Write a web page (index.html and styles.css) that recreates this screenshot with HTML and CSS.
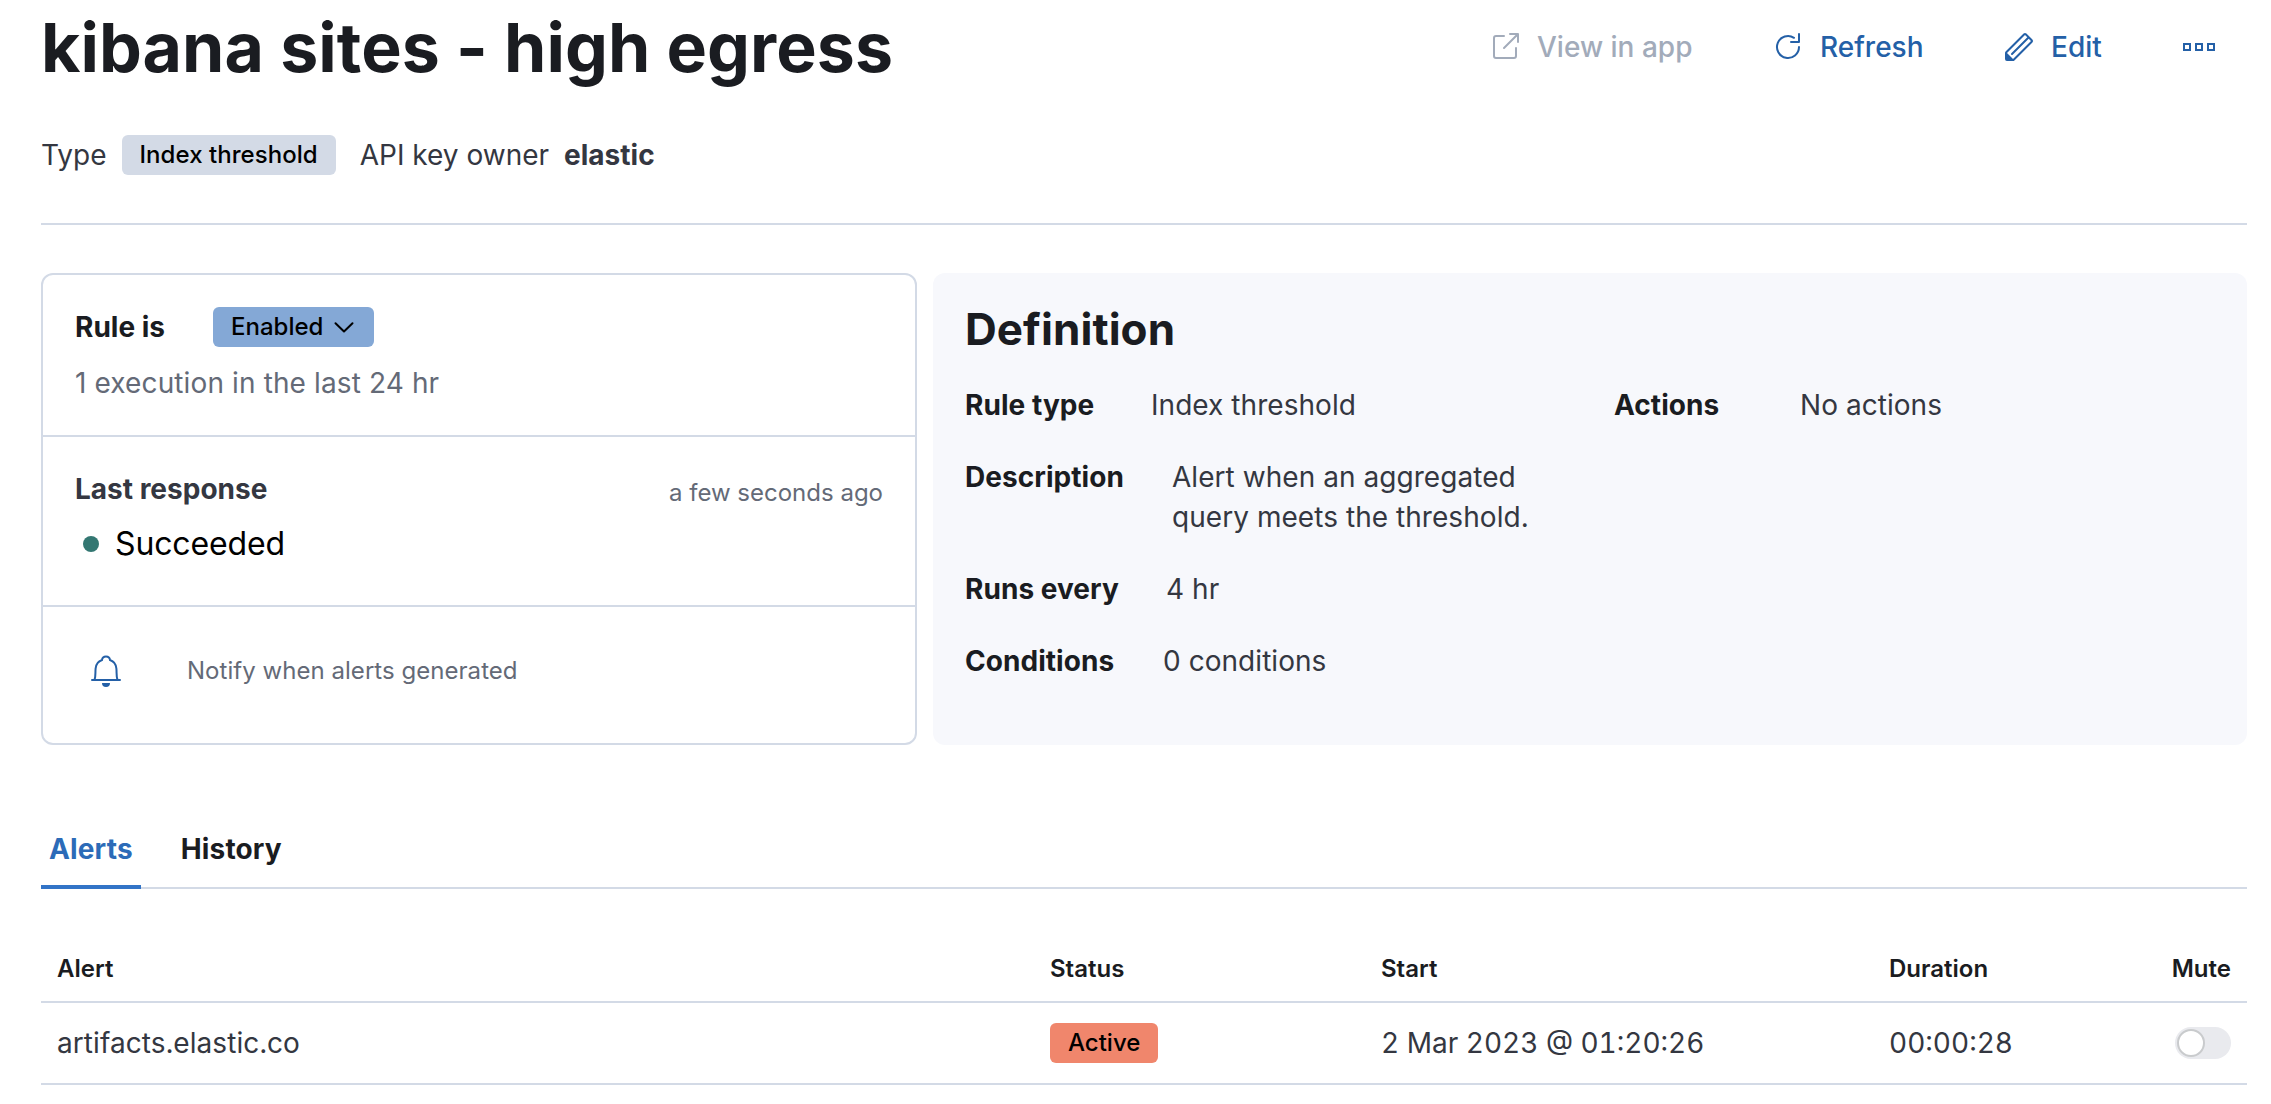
FILE: index.html
```html
<!DOCTYPE html>
<html lang="en">
<head>
<meta charset="utf-8">
<title>kibana sites - high egress</title>
<link rel="stylesheet" href="styles.css">
</head>
<body>
<main class="page">
  <header class="header">
    <h1 class="title">kibana sites - high egress</h1>
    <nav class="actions">
      <button class="action action-view" disabled>
        <svg class="icon" viewBox="0 0 16 16" fill="none" stroke="currentColor" stroke-linecap="round" stroke-linejoin="round"><path d="M7.500 2.500h-4a1 1 0 0 0-1 1v9a1 1 0 0 0 1 1h9a1 1 0 0 0 1-1v-4M10.500 1.500h4v4M14.500 1.500l-7 7"/></svg>
        <span>View in app</span>
      </button>
      <button class="action action-refresh">
        <svg class="icon" viewBox="0 0 16 16" fill="none" stroke="currentColor" stroke-linecap="round" stroke-linejoin="round"><path d="M13.500 8A5.500 5.500 0 1 1 11 3.400M13.500 1.500v4h-4"/></svg>
        <span>Refresh</span>
      </button>
      <button class="action action-edit">
        <svg class="icon" viewBox="0 0 16 16" fill="currentColor"><path fill-rule="evenodd" d="M12.148 3.148 11 2l-9 9v3h3l9-9-1.144-1.144-8.002 7.998a.502.502 0 0 1-.708 0 .502.502 0 0 1 0-.708l8.002-7.998zM11 1c.256 0 .512.098.707.293l3 3a.999.999 0 0 1 0 1.414l-9 9A.997.997 0 0 1 5 15H2a1 1 0 0 1-1-1v-3c0-.256.098-.512.293-.707l9-9A.997.997 0 0 1 11 1z"/><path d="M5 14H2v-3z"/></svg>
        <span>Edit</span>
      </button>
      <button class="action action-more" aria-label="More">
        <svg class="icon" viewBox="0 0 16 16" fill="none" stroke="currentColor"><path d="M.5 6.500h3v3h-3zM6.500 6.500h3v3h-3zM12.500 6.500h3v3h-3z"/></svg>
      </button>
    </nav>
  </header>

  <div class="meta">
    <span>Type</span>
    <span class="badge badge-type">Index threshold</span>
    <span class="meta-owner">API key owner</span>
    <strong>elastic</strong>
  </div>

  <div class="panels">
    <section class="summary">
      <div class="summary-part part-rule">
        <div class="rule-line"><b>Rule is</b>
          <button class="badge badge-enabled">Enabled
            <svg class="chevron" viewBox="0 0 24 24" fill="none" stroke="currentColor" stroke-width="2" stroke-linecap="round" stroke-linejoin="round"><path d="M3.500 8.200 12 16.500 20.500 8.200"/></svg>
          </button>
        </div>
        <p class="executions">1 execution in the last 24 hr</p>
      </div>
      <div class="summary-part part-response">
        <div class="response-line"><b>Last response</b><span class="ago">a few seconds ago</span></div>
        <div class="health"><i class="dot"></i><span>Succeeded</span></div>
      </div>
      <div class="summary-part part-notify">
        <svg class="icon bell" viewBox="0 0 16 16" fill="none" stroke="currentColor" stroke-linecap="round"><path d="M1 12.500h14M2.300 12.300C2.900 10.500 2.600 9 2.800 6.800 3 4.300 4.200 3.100 6 2.500 6.200.1 9.800.1 10 2.500c1.800.6 3 1.800 3.200 4.300.2 2.200-.1 3.700.5 5.500"/><path d="M6 14h4a2 2 0 0 1-4 0z" fill="currentColor" stroke="none"/></svg>
        <span>Notify when alerts generated</span>
      </div>
    </section>

    <section class="definition">
      <h2>Definition</h2>
      <div class="definition-columns">
        <dl class="facts">
          <div class="fact fact-type"><dt>Rule type</dt><dd>Index threshold</dd></div>
          <div class="fact fact-description"><dt>Description</dt><dd>Alert when an aggregated<br>query meets the threshold.</dd></div>
          <div class="fact fact-runs"><dt>Runs every</dt><dd>4 hr</dd></div>
          <div class="fact fact-conditions"><dt>Conditions</dt><dd>0 conditions</dd></div>
        </dl>
        <dl class="facts">
          <div class="fact fact-actions"><dt>Actions</dt><dd>No actions</dd></div>
        </dl>
      </div>
    </section>
  </div>

  <div class="tabs">
    <button class="tab tab-selected">Alerts</button>
    <button class="tab">History</button>
  </div>

  <div class="table">
    <div class="row row-head"><span>Alert</span><span>Status</span><span>Start</span><span>Duration</span><span class="mute">Mute</span></div>
    <div class="row row-body">
      <span>artifacts.elastic.co</span>
      <span><span class="badge badge-active">Active</span></span>
      <span>2 Mar 2023 @ 01:20:26</span>
      <span>00:00:28</span>
      <span class="mute"><span class="switch"><i class="knob"></i></span></span>
    </div>
  </div>
</main>
</body>
</html>
```
FILE: styles.css
```css
* { box-sizing: border-box; margin: 0; padding: 0; }
body { background: #fff; color: #343741; font: 400 28px/40px Inter, sans-serif; }
button { background: none; border: 0; font: inherit; color: inherit; }
b, strong { font-weight: 700; }
.page { height: 1104px; padding: 0 24px 0 41px; overflow: hidden; }
.icon { width: 32px; height: 32px; flex: none; display: block; }

.header { display: flex; justify-content: space-between; height: 96px; }
.title { font-size: 68px; line-height: 80px; margin-top: 7px; font-weight: 700; letter-spacing: .06px; color: #1a1c21; white-space: nowrap; }
.actions { display: flex; align-items: center; height: 40px; margin-top: 27px; color: #2460a7; font-weight: 500; }
.action { display: flex; align-items: center; gap: 16px; white-space: nowrap; }
.action-view { color: #a2abba; width: 283px; }
.action-refresh { width: 231px; }
.action-edit { width: 180px; }
.action-more { width: 64px; }

.meta { display: flex; align-items: center; height: 129px; padding: 0 0 9px; border-bottom: 2px solid #d3dae6; }
.badge { display: inline-flex; align-items: center; height: 40px; padding: 0 18px; border-radius: 6px; font-size: 24px; line-height: 40px; font-weight: 500; color: #000; white-space: nowrap; }
.badge-type { background: #d3dae6; margin: 0 24px 0 15px; letter-spacing: .05px; }
.badge-enabled { background: #84a8d6; gap: 9px; }
.badge-active { background: #f0866c; }
.meta-owner { margin-right: 15px; }

.panels { display: flex; gap: 16px; height: 472px; margin-top: 48px; }
.summary { width: 876px; border: 2px solid #d3dae6; border-radius: 12px; }
.summary-part { padding: 0 32px; }
.part-rule { height: 162px; padding-top: 32px; border-bottom: 2px solid #d3dae6; }
.rule-line { display: flex; align-items: center; gap: 48px; color: #1a1c21; }
.chevron { width: 24px; height: 24px; }
.executions { margin-top: 16px; letter-spacing: .12px; color: #646a77; }
.part-response { height: 170px; padding-top: 32px; border-bottom: 2px solid #d3dae6; }
.response-line { display: flex; justify-content: space-between; }
.ago { font-size: 24px; line-height: 48px; color: #646a77; }
.health { display: flex; align-items: center; gap: 16px; margin-top: 7px; padding-left: 8px; font-size: 32px; letter-spacing: -.12px; color: #000; }
.dot { width: 16px; height: 16px; border-radius: 50%; background: #337772; }
.part-notify { display: flex; align-items: center; height: 136px; padding: 0 47px 8px; gap: 65px; font-size: 24px; letter-spacing: .04px; color: #646a77; }
.bell { color: #2460a7; }

.definition { flex: 1; background: #f7f8fc; border-radius: 12px; padding: 32px; }
h2 { font-size: 44px; line-height: 48px; font-weight: 700; letter-spacing: .06px; color: #1a1c21; }
.definition-columns { display: grid; grid-template-columns: 649px 1fr; padding-top: 32px; }
.facts { display: flex; flex-direction: column; gap: 32px; letter-spacing: .05px; }
.fact { display: flex; white-space: nowrap; }
dt { font-weight: 700; color: #1a1c21; }
.fact-type dt { width: 186px; }
.fact-description dt { width: 207px; }
.fact-runs dt { width: 201px; }
.fact-conditions dt { width: 198px; }
.fact-actions dt { width: 186px; }

.tabs { display: flex; gap: 32px; height: 80px; margin-top: 64px; box-shadow: inset 0 -2px #d3dae6; }
.tab { padding: 0 8px; font-weight: 700; letter-spacing: .15px; color: #1a1c21; }
.tab-selected { color: #2c6bb8; box-shadow: inset 0 -4px #3274c7; }

.table { margin-top: 48px; }
.row { display: grid; grid-template-columns: 993px 331px 508px 1fr auto; align-items: center; padding: 0 16px; border-bottom: 2px solid #d3dae6; }
.row-head { height: 66px; font-size: 24px; font-weight: 600; color: #1a1c21; }
.row-body { height: 82px; font-feature-settings: "tnum" 1; }
.row-body > span:first-child { letter-spacing: .08px; }
.row span { display: flex; white-space: nowrap; }
.row .mute { justify-content: flex-end; }
.row .badge { display: inline-flex; }
.switch { width: 56px; height: 32px; padding: 2px; border-radius: 16px; background: #e9eaee; }
.knob { width: 28px; height: 28px; border: 2px solid #c9cbcd; border-radius: 50%; background: #fff; }
```
